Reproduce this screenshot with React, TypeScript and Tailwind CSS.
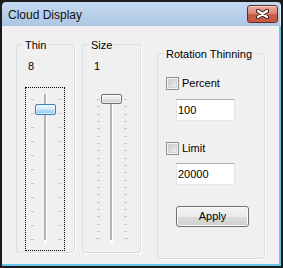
import React from "react";

const thinTicks = Array.from({ length: 11 }, (_, k) => 12 + 14 * k);
const sizeTicks = Array.from({ length: 20 }, (_, k) => Math.round(12 + (22 * k) / 3));

function Slider({ ticks, focused, thumb }: { ticks: number[]; focused: boolean; thumb: React.ReactNode }) {
  const last = ticks.length - 1;
  return (
    <div className="relative w-[40px] h-[164px]">
      {focused && <div className="absolute inset-0 border border-dotted border-black" />}
      <svg className="absolute left-0 top-0" width="40" height="164" shapeRendering="crispEdges">
        <rect x="19" y="7" width="2" height="146" fill="#b3b3b3" />
        <rect x="21" y="7" width="1" height="149" fill="#ffffff" />
        <rect x="19" y="153" width="3" height="3" fill="#ffffff" />
        {ticks.map((y, i) => (
          <g key={i}>
            <rect x={i === last ? 5 : 6} y={y} width={i === last ? 4 : 3} height="1" fill="#c6c6c6" />
            <rect x="33" y={y} width={i === last ? 4 : 3} height="1" fill="#c6c6c6" />
          </g>
        ))}
      </svg>
      {thumb}
    </div>
  );
}

function CheckBox({ label }: { label: string }) {
  return (
    <div className="flex items-center h-[13px]">
      <div className="w-[13px] h-[13px] border border-[#8e8f8f] bg-[#f4f4f4] p-[1px]">
        <div className="w-full h-full border border-[#d0d2d5] bg-[linear-gradient(135deg,#c5c9cf,#eeeff0)]" />
      </div>
      <span className="ml-[3px] leading-[13px]">{label}</span>
    </div>
  );
}

function TextBox({ value }: { value: string }) {
  return (
    <div className="w-[59px] h-[22px] bg-white border border-[#e2e3ea] border-t-[#abadb3] border-b-[#e3e9ef] pl-[1px] leading-[20px]">
      {value}
    </div>
  );
}

export default function App() {
  return (
    <div className="w-[283px] h-[268px] bg-[#1c1c1c] p-[2px] font-['Liberation_Sans',Arial,sans-serif] text-[11px] text-black">
      <div className="flex flex-col h-full w-full">
        <div className="h-[24px] flex items-start rounded-t-[4px] bg-[linear-gradient(#c4d9ef,#adc6e3)] border-r border-[#dfe9f5]">
          <span className="text-[12px] leading-[14px] pl-[6px] pt-[6px] text-[#111]">Cloud Display</span>
          <div className="ml-auto mr-[2px] mt-[3px] w-[31px] h-[18px] rounded-[3px] border border-[#5e2a2a] bg-[linear-gradient(#e9a99b,#dc8a79_45%,#c95a44_55%,#c45a44)] shadow-[inset_0_1px_0_rgba(255,255,255,0.5)] flex items-center justify-center">
            <svg width="13" height="10" viewBox="0 0 13 10">
              <path d="M2 2 L11 8 M11 2 L2 8" stroke="#3d2020" strokeWidth="4.2" strokeLinecap="round" fill="none" />
              <path d="M2 2 L11 8 M11 2 L2 8" stroke="#ffffff" strokeWidth="2.2" strokeLinecap="round" fill="none" />
            </svg>
          </div>
        </div>
        <div className="flex-1 border-r-2 border-b-2 border-[#6cc3ea] bg-[#f0f0f0] flex items-start">
          <fieldset className="ml-[14px] mt-[11px] w-[59px] h-[216px] border border-[#d5dfe5] rounded-[3px] shadow-[1px_1px_0_#fff] min-w-0">
            <legend className="ml-[6px] px-[2px] pt-[2px] leading-[12px]">Thin</legend>
            <div className="ml-[11px] mt-[9px] leading-[13px]">8</div>
            <div className="ml-[8px] mt-[14px]">
              <Slider
                ticks={thinTicks}
                focused={true}
                thumb={
                  <div className="absolute left-[10px] top-[17px] w-[21px] h-[11px] rounded-[2px] border border-[#3c7fb1] bg-[linear-gradient(#eaf6fd,#d3eefc_45%,#aedcf6_55%,#94cff0)] shadow-[inset_0_0_0_1px_rgba(255,255,255,0.55)]" />
                }
              />
            </div>
          </fieldset>
          <fieldset className="ml-[7px] mt-[11px] w-[59px] h-[216px] border border-[#d5dfe5] rounded-[3px] shadow-[1px_1px_0_#fff] min-w-0">
            <legend className="ml-[6px] px-[2px] pt-[2px] leading-[12px]">Size</legend>
            <div className="ml-[11px] mt-[9px] leading-[13px]">1</div>
            <div className="ml-[8px] mt-[14px]">
              <Slider
                ticks={sizeTicks}
                focused={false}
                thumb={
                  <div className="absolute left-[10px] top-[7px] w-[21px] h-[10px] rounded-[2px] border border-[#707070] bg-[linear-gradient(#f4f4f4,#ebebeb_45%,#dcdcdc_55%,#cfcfcf)] shadow-[inset_0_0_0_1px_rgba(255,255,255,0.6)]" />
                }
              />
            </div>
          </fieldset>
          <fieldset className="ml-[16px] mt-[20px] w-[108px] h-[213px] border border-[#d5dfe5] rounded-[3px] shadow-[1px_1px_0_#fff] min-w-0">
            <legend className="ml-[6px] px-[2px] pt-[2px] leading-[12px]">Rotation Thinning</legend>
            <div className="ml-[8px] mt-[17px]">
              <CheckBox label="Percent" />
            </div>
            <div className="ml-[18px] mt-[9px]">
              <TextBox value="100" />
            </div>
            <div className="ml-[8px] mt-[21px]">
              <CheckBox label="Limit" />
            </div>
            <div className="ml-[18px] mt-[8px]">
              <TextBox value="20000" />
            </div>
            <div className="ml-[18px] mt-[21px] w-[73px] h-[21px] rounded-[3px] border border-[#707070] bg-[linear-gradient(#f2f2f2,#ebebeb_50%,#dddddd_50%,#cfcfcf)] shadow-[inset_0_0_0_1px_#fbfbfb] flex items-center justify-center leading-[13px]">
              Apply
            </div>
          </fieldset>
        </div>
      </div>
    </div>
  );
}
